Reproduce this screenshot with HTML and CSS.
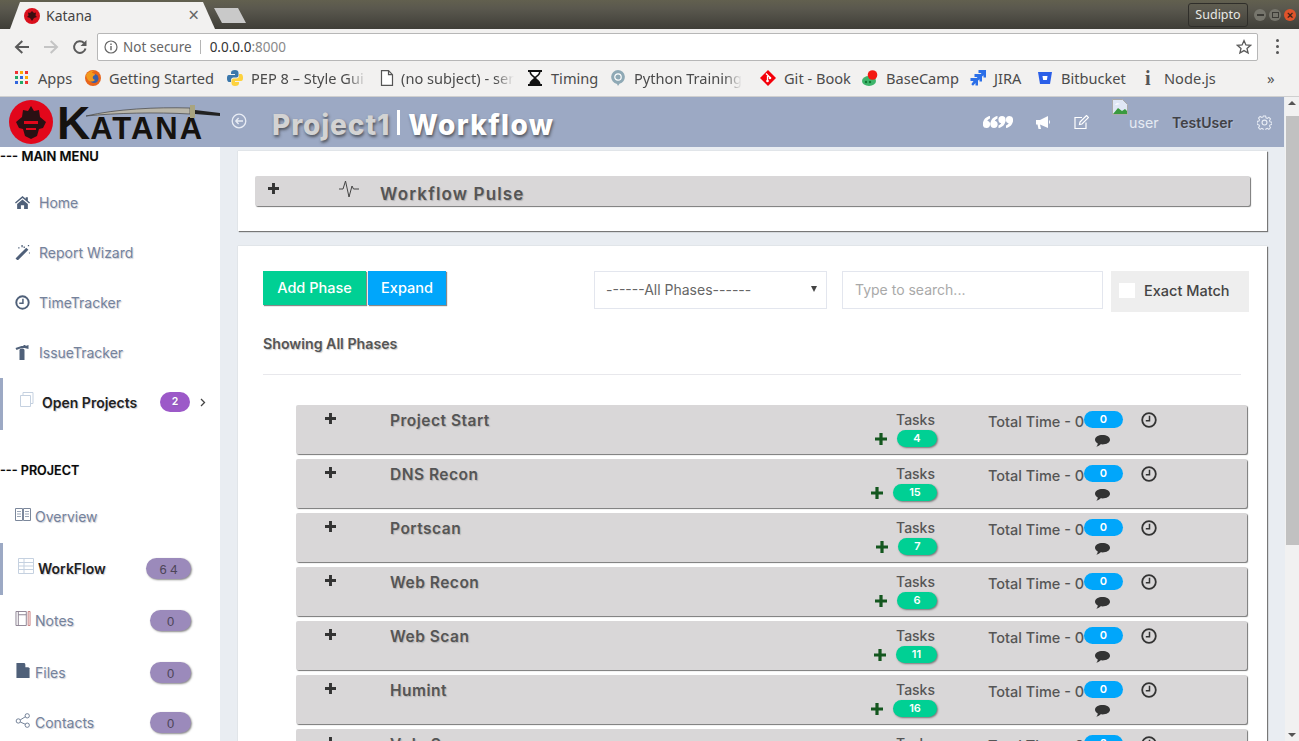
FILE: index.html
```html
<!DOCTYPE html>
<html lang="en">
<head>
<meta charset="utf-8">
<title>Katana</title>
<link rel="stylesheet" href="styles.css">
</head>
<body>
<svg class="defs" width="0" height="0" aria-hidden="true">
  <symbol id="i-plus" viewBox="0 0 12 12"><path d="M4.4 0h3.2v4.4H12v3.2H7.600V12H4.400V7.600H0V4.400h4.400z"/></symbol>
  <symbol id="i-clock" viewBox="0 0 16 16"><circle cx="8" cy="8" r="6.800" fill="none" stroke="currentColor" stroke-width="1.800"/><path d="M8.500 3.800v4.900H4.800" fill="none" stroke="currentColor" stroke-width="1.500"/></symbol>
  <symbol id="i-comment" viewBox="0 0 15 12"><path d="M7.500 0C11.600 0 15 2.100 15 4.700S11.600 9.400 7.500 9.400c-.6 0-1.200 0-1.800-.1C4.600 10.400 3.200 11.300 1.400 11.800c.8-.9 1.300-2 1.400-3.300C1.100 7.600 0 6.200 0 4.700 0 2.100 3.400 0 7.500 0z"/></symbol>
</svg>

<div class="tabstrip">
  <div class="tab">
    <svg class="fav" viewBox="0 0 16 16"><circle cx="8" cy="8" r="8" fill="#d9101c"/><path d="M8 3l2 2 2-.5-.5 3L13 9l-3 1-2 3-2-3-3-1 1.500-1.500-.5-3 2 .5z" fill="#3b0d10"/></svg>
    <span class="tab-title">Katana</span>
    <span class="tab-close">×</span>
  </div>
  <div class="newtab"></div>
  <div class="winspace"></div>
  <div class="profile">Sudipto</div>
  <div class="winbtns">
    <span class="winbtn"><span class="wb-min"></span></span>
    <span class="winbtn"><span class="wb-max"></span></span>
    <span class="winbtn wb-close">×</span>
  </div>
</div>

<div class="toolbar">
  <svg class="nav" viewBox="0 0 16 16"><path d="M15 8H2.500M8.300 2 2 8l6.300 6" fill="none" stroke="#5a5a5a" stroke-width="2"/></svg>
  <svg class="nav" viewBox="0 0 16 16"><path d="M1 8h12.500M7.700 2 14 8l-6.300 6" fill="none" stroke="#c4c4c4" stroke-width="2"/></svg>
  <svg class="nav" viewBox="0 0 16 16"><path d="M13.500 9.500A5.800 5.800 0 1 1 12 4" fill="none" stroke="#5a5a5a" stroke-width="2"/><path d="M14.500 1v6h-6z" fill="#5a5a5a"/></svg>
  <div class="omni">
    <svg class="omni-info" viewBox="0 0 14 14"><circle cx="7" cy="7" r="6" fill="none" stroke="#666" stroke-width="1.200"/><path d="M6.300 6h1.400v4.300H6.300zM6.300 3.500h1.400v1.400H6.300z" fill="#666"/></svg>
    <span class="omni-ns">Not secure</span>
    <span class="omni-sep"></span>
    <span class="omni-host">0.0.0.0</span><span class="omni-port">:8000</span>
    <svg class="omni-star" viewBox="0 0 16 16"><path d="M8 1.600l1.900 4.300 4.700.4-3.600 3.100 1.100 4.600L8 11.600 3.900 14l1.100-4.600L1.400 6.300l4.700-.4z" fill="none" stroke="#5a5a5a" stroke-width="1.300"/></svg>
  </div>
  <div class="kebab"><i></i><i></i><i></i></div>
</div>

<div class="bookmarks">
  <div class="bm bm-apps">
    <svg class="bm-ic" viewBox="0 0 14 14"><path fill="#e33" d="M0 0h3v3H0z"/><path fill="#fa0" d="M5 0h3v3H5z"/><path fill="#e33" d="M10 0h3v3h-3z"/><path fill="#2a6" d="M0 5h3v3H0z"/><path fill="#36d" d="M5 5h3v3H5z"/><path fill="#fa0" d="M10 5h3v3h-3z"/><path fill="#36d" d="M0 10h3v3H0z"/><path fill="#2a6" d="M5 10h3v3H5z"/><path fill="#e33" d="M10 10h3v3h-3z"/></svg>
    <span>Apps</span>
  </div>
  <div class="bm bm-ff">
    <svg class="bm-ic" viewBox="0 0 16 16"><circle cx="8" cy="8" r="8" fill="#e8641b"/><circle cx="9" cy="8.500" r="4.500" fill="#3b5fa8"/><path d="M1 5c2-3 5-5 9-4-2 0-3 1-3 2 2 0 3 1 3 2-3 1-3 4 0 5-3 3-8 2-9-5z" fill="#f29a1f"/></svg>
    <span>Getting Started</span>
  </div>
  <div class="bm bm-py fade">
    <svg class="bm-ic" viewBox="0 0 16 16"><path d="M8 0c-3 0-4 1-4 3v1h4v1H2C0 5 0 7 0 8.500S.5 12 2 12h2v-2c0-1.500 1-2.500 2.500-2.500h3c1 0 2-1 2-2V3c0-2-1-3-3.500-3z" fill="#3b77ab"/><path d="M8 16c3 0 4-1 4-3v-1H8v-1h6c2 0 2-2 2-3.500S15.500 4 14 4h-2v2c0 1.500-1 2.500-2.500 2.500h-3c-1 0-2 1-2 2V13c0 2 1 3 3.500 3z" fill="#fdd23e"/></svg>
    <span>PEP 8 – Style Gui</span>
  </div>
  <div class="bm bm-doc fade">
    <svg class="bm-ic" viewBox="0 0 14 16"><path d="M1.500.7h7l4 4v10.600h-11zM8.500.7v4h4" fill="#fff" stroke="#555" stroke-width="1.200"/></svg>
    <span>(no subject) - sen</span>
  </div>
  <div class="bm bm-time">
    <svg class="bm-ic" viewBox="0 0 16 16"><path d="M1 0h14v2h-1.500c0 3-3 4.500-4.500 6 1.500 1.500 4.500 3 4.500 6H15v2H1v-2h1.500c0-3 3-4.500 4.500-6-1.500-1.500-4.500-3-4.500-6H1z" fill="#111"/><path d="M4 2h8c-.3 2-2.500 3.500-4 4.700C6.500 5.500 4.300 4 4 2z" fill="#fff"/></svg>
    <span>Timing</span>
  </div>
  <div class="bm bm-pt fade">
    <svg class="bm-ic" viewBox="0 0 14 16"><path d="M7 0a7 7 0 0 1 1.500 13.800L7 16l-1-2.100A7 7 0 0 1 7 0z" fill="#8fa9b5"/><circle cx="7" cy="7" r="3.200" fill="none" stroke="#fff" stroke-width="1.200"/></svg>
    <span>Python Training -</span>
  </div>
  <div class="bm bm-git">
    <svg class="bm-ic" viewBox="0 0 16 16"><path d="M8 0l8 8-8 8-8-8z" fill="#f4000a"/><path d="M6 3.500l4 4M7.500 6v5" stroke="#fff" stroke-width="1.300"/><circle cx="7.500" cy="11" r="1.300" fill="#fff"/><circle cx="10" cy="8" r="1.300" fill="#fff"/></svg>
    <span>Git - Book</span>
  </div>
  <div class="bm bm-bc">
    <svg class="bm-ic" viewBox="0 0 16 16"><ellipse cx="7" cy="11" rx="7" ry="5" fill="#3eb56b"/><circle cx="10.500" cy="5" r="4.800" fill="#f41a12"/><circle cx="4" cy="12" r="1.200" fill="#173"/><circle cx="8" cy="12" r="1.200" fill="#173"/></svg>
    <span>BaseCamp</span>
  </div>
  <div class="bm bm-jira">
    <svg class="bm-ic" viewBox="0 0 16 16"><path d="M8.500 0H16v7.500h-2.500V5.200L10.500 8 8.800 6.300 11.500 3H8.500zM4.500 4H12v7.500H9.500V9.200L6.500 12 4.800 10.300 7.500 7H4.500zM.5 8H8v7.500H5.500V13L3 15.800 1.300 14.300 3.500 11H.5z" fill="#2b6fe8"/></svg>
    <span>JIRA</span>
  </div>
  <div class="bm bm-bb">
    <svg class="bm-ic" viewBox="0 0 14 14"><path d="M0 1h14l-2 12H2z" fill="#2b5fe8"/><path d="M4.500 5h5l-.6 4H5.100z" fill="#fff"/></svg>
    <span>Bitbucket</span>
  </div>
  <div class="bm bm-node">
    <span class="bm-i">i</span>
    <span>Node.js</span>
  </div>
  <div class="bm-more">»</div>
</div>

<div class="app">
  <div class="app-left">
    <header class="header">
      <div class="logo">
        <svg class="logo-badge" viewBox="0 0 44 44"><circle cx="22" cy="22" r="22" fill="#e2071b"/><path d="M22 6l3 5 5-1 1 7 6 5-3 6-4 1-2 7-6 3-6-3-2-7-4-1-3-6 6-5 1-7 5 1z" fill="#2a1013"/><path d="M15 21h14v3H15zM17 28h10v2H17z" fill="#e2071b"/></svg>
        <span class="logo-text"><span class="logo-k">K</span>ATANA</span>
        <svg class="logo-sword" viewBox="0 0 134 14"><path d="M0 11C30 4 70 2 104 3v6C70 7 30 8 0 11z" fill="#b9b6aa" stroke="#444" stroke-width=".7"/><path d="M104 0h5v13h-5z" fill="#a8a47f"/><path d="M109 5l25 3v3l-25-2z" fill="#222"/></svg>
      </div>
      <div class="hdr-main">
        <svg class="hdr-back" viewBox="0 0 16 16"><circle cx="8" cy="8" r="6.800" fill="none" stroke="#e9edf5" stroke-width="1.300"/><path d="M12 8H5M7.600 5 4.800 8l2.800 3" fill="none" stroke="#e9edf5" stroke-width="1.300"/></svg>
        <h1 class="hdr-title"><span class="hdr-project">Project1</span><span class="hdr-bar"></span><span class="hdr-page">Workflow</span></h1>
        <div class="hdr-actions">
          <svg class="hdr-quote" viewBox="0 0 30 12" fill="#fff"><circle cx="3.500" cy="8.300" r="3.600"/><path d="M0 8C0 3.500 3 .7 7 0v2.500C5 3 3.800 5 3.800 8z"/><circle cx="11" cy="8.300" r="3.600"/><path d="M7.500 8c0-4.500 3-7.300 7-8v2.500c-2 .5-3.200 2.500-3.200 5.500z"/><circle cx="19" cy="3.700" r="3.600"/><path d="M22.500 4c0 4.500-3 7.300-7 8V9.500c2-.5 3.200-2.500 3.200-5.500z"/><circle cx="26.500" cy="3.700" r="3.600"/><path d="M30 4c0 4.500-3 7.300-7 8V9.500c2-.5 3.200-2.500 3.200-5.500z"/></svg>
          <svg class="hdr-mega" viewBox="0 0 15 13"><path d="M0 4h4l8-4v12L4 8.500 5 13H2.500L1.500 8.500H0z" fill="#fff"/><path d="M13 4c1.300.5 1.300 3.500 0 4z" fill="#fff"/></svg>
          <svg class="hdr-edit" viewBox="0 0 15 15"><path d="M12 7.500V13.500H1V2.500h7" fill="none" stroke="#fff" stroke-width="1.200"/><path d="M6 7l6.500-6.500 2 2L8 9l-2.500.5z" fill="none" stroke="#fff" stroke-width="1.200"/></svg>
          <div class="hdr-img">
            <svg class="broken" viewBox="0 0 16 16"><path d="M.5.5h10l5 5v10H.5z" fill="#dfe7f5" stroke="#aaa"/><path d="M1 15l5-6 4 3 3-2 2 2v3z" fill="#3a9a3f"/><path d="M3 6c1-2 3-2 5-1z" fill="#fff"/></svg>
            <span class="hdr-alt">user</span>
          </div>
          <span class="hdr-user">TestUser</span>
          <svg class="hdr-gear" viewBox="0 0 16 16"><circle cx="8" cy="8" r="2.600" fill="none" stroke="#e9edf5" stroke-width="1.200"/><path d="M6.800 1h2.400l.4 2 1.300.6 1.800-1.100 1.700 1.700-1.100 1.800.6 1.300 2 .4v2.400l-2 .4-.6 1.300 1.100 1.800-1.700 1.700-1.800-1.100-1.300.6-.4 2H6.800l-.4-2-1.300-.6-1.800 1.100-1.700-1.700 1.100-1.800-.6-1.300-2-.4V6.800l2-.4.600-1.300-1.100-1.800 1.700-1.700 1.800 1.100 1.300-.6z" fill="none" stroke="#e9edf5" stroke-width="1.100"/></svg>
        </div>
      </div>
    </header>

    <div class="body">
      <aside class="sidebar">
        <div class="sec sec-main">--- MAIN MENU</div>
        <nav class="menu">
          <a class="mi">
            <svg class="mi-ic" viewBox="0 0 14 12"><path d="M7 0l3 2.600V1h2v3.300L14 6l-.8.9L7 1.700.8 6.900 0 6zM2 7.400L7 3.200l5 4.200V12H8.500V8.500h-3V12H2z" fill="#4f6079"/></svg>
            <span>Home</span>
          </a>
          <a class="mi">
            <svg class="mi-ic" viewBox="0 0 14 14"><path d="M10.500 2.500l2 2L2.500 14.500l-2-2z" fill="#4f6079"/><path d="M3 2h1.200v1.200H3zM6 0h1.200v2H6zM12 0h1.200v1.200H12zM13 7h1v1h-1zM8 1.500h1.200v1.200H8z" fill="#4f6079"/></svg>
            <span>Report Wizard</span>
          </a>
          <a class="mi">
            <svg class="mi-ic" viewBox="0 0 14 14"><circle cx="7" cy="7" r="5.800" fill="none" stroke="#4f6079" stroke-width="1.800"/><path d="M7.400 3.500v4.200H4" fill="none" stroke="#4f6079" stroke-width="1.400"/></svg>
            <span>TimeTracker</span>
          </a>
          <a class="mi">
            <svg class="mi-ic" viewBox="0 0 14 15"><path d="M4 5.500C4 4 5 3.500 6.500 3.500S9 4 9 5.500V15H4z" fill="#4f6079"/><path d="M0 3l6-2h2V0h2v1l3-1v4L9 3H6L1 5z" fill="#4f6079"/></svg>
            <span>IssueTracker</span>
          </a>
          <a class="mi mi-open">
            <svg class="mi-ic-open" viewBox="0 0 14 15"><path d="M3 3V.5h10v11h-2.500" fill="#fff" stroke="#c5d1e0"/><path d="M.5 3.500H10.500V14.500H.5z" fill="#fff" stroke="#c5d1e0"/></svg>
            <span class="mi-open-label">Open Projects</span>
            <span class="badge-purple">2</span>
            <svg class="mi-chev" viewBox="0 0 6 9"><path d="M1 1l3.500 3.500L1 8" fill="none" stroke="#444" stroke-width="1.300"/></svg>
          </a>
        </nav>
        <div class="sec sec-proj">--- PROJECT</div>
        <nav class="menu">
          <a class="pi">
            <svg class="pi-ic" viewBox="0 0 16 14"><path d="M.5 1h7v12h-7zM8.500 1h7v12h-7z" fill="#fff" stroke="#7b879b"/><path d="M2 4h4M2 6.500h4M2 9h4M10 4h4M10 6.500h4M10 9h4" stroke="#9ba6b7"/></svg>
            <span>Overview</span>
          </a>
          <a class="pi pi-active">
            <svg class="pi-ic-active" viewBox="0 0 16 16"><path d="M.5.5h15v15H.5zM.5 4.500h15M.5 8h15M.5 11.500h15M6 .5v15" fill="#fff" stroke="#c5d1e0"/></svg>
            <span class="pi-active-label">WorkFlow</span>
            <span class="badge-soft badge-wide">6 4</span>
          </a>
          <a class="pi">
            <svg class="pi-ic" viewBox="0 0 16 16"><path d="M.5.5h11v15H.5zM3 .5v15M3 4h8.500" fill="#fff" stroke="#8a7f8f"/><path d="M13.500.5h2v15h-2z" fill="#fff" stroke="#c57a7a"/></svg>
            <span>Notes</span>
            <span class="badge-soft">0</span>
          </a>
          <a class="pi">
            <svg class="pi-ic" viewBox="0 0 14 16"><path d="M0 0h8.500L14 5.500V16H0z" fill="#4f6079"/><path d="M9.500 0L14 4.500H9.500z" fill="#fff"/></svg>
            <span>Files</span>
            <span class="badge-soft">0</span>
          </a>
          <a class="pi pi-last">
            <svg class="pi-ic" viewBox="0 0 16 16"><circle cx="3" cy="8.500" r="2.300" fill="none" stroke="#6c7b92"/><circle cx="12.500" cy="3" r="2.300" fill="none" stroke="#6c7b92"/><circle cx="12.500" cy="13" r="2.300" fill="none" stroke="#6c7b92"/><path d="M5 7.400l5.500-3.400M5 9.600l5.500 2.400" stroke="#6c7b92"/></svg>
            <span>Contacts</span>
            <span class="badge-soft">0</span>
          </a>
        </nav>
      </aside>

      <main class="main">
        <section class="card card-pulse">
          <div class="pulse">
            <svg class="pulse-plus"><use href="#i-plus"/></svg>
            <svg class="pulse-ic" viewBox="0 0 20 18"><path d="M0 9h4l2.500-8 3.500 16 3-11 1.500 3H20" fill="none" stroke="#444" stroke-width="1"/></svg>
            <span class="pulse-title">Workflow Pulse</span>
          </div>
        </section>

        <section class="card card-list">
          <div class="controls">
            <button class="btn btn-green">Add Phase</button>
            <button class="btn btn-blue">Expand</button>
            <div class="select"><span>------All Phases------</span><i class="caret"></i></div>
            <div class="search">Type to search...</div>
            <label class="exact"><i class="check"></i><span>Exact Match</span></label>
          </div>
          <h4 class="showing">Showing All Phases</h4>
          <hr class="rule">
          <div class="phases">
            <div class="phase">
              <svg class="ph-plus"><use href="#i-plus"/></svg>
              <span class="ph-name">Project Start</span>
              <div class="ph-tasks"><span class="ph-label">Tasks</span><div class="ph-add"><svg class="add-ic"><use href="#i-plus"/></svg><span class="pill-green p1">4</span></div></div>
              <div class="ph-time"><div class="ph-line"><span class="ph-tt">Total Time - 0</span><span class="pill-blue">0</span></div><svg class="ph-comment"><use href="#i-comment"/></svg></div>
              <svg class="ph-clock"><use href="#i-clock"/></svg>
            </div>
            <div class="phase">
              <svg class="ph-plus"><use href="#i-plus"/></svg>
              <span class="ph-name">DNS Recon</span>
              <div class="ph-tasks"><span class="ph-label">Tasks</span><div class="ph-add"><svg class="add-ic"><use href="#i-plus"/></svg><span class="pill-green p2">15</span></div></div>
              <div class="ph-time"><div class="ph-line"><span class="ph-tt">Total Time - 0</span><span class="pill-blue">0</span></div><svg class="ph-comment"><use href="#i-comment"/></svg></div>
              <svg class="ph-clock"><use href="#i-clock"/></svg>
            </div>
            <div class="phase">
              <svg class="ph-plus"><use href="#i-plus"/></svg>
              <span class="ph-name">Portscan</span>
              <div class="ph-tasks"><span class="ph-label">Tasks</span><div class="ph-add"><svg class="add-ic"><use href="#i-plus"/></svg><span class="pill-green p1s">7</span></div></div>
              <div class="ph-time"><div class="ph-line"><span class="ph-tt">Total Time - 0</span><span class="pill-blue">0</span></div><svg class="ph-comment"><use href="#i-comment"/></svg></div>
              <svg class="ph-clock"><use href="#i-clock"/></svg>
            </div>
            <div class="phase">
              <svg class="ph-plus"><use href="#i-plus"/></svg>
              <span class="ph-name">Web Recon</span>
              <div class="ph-tasks"><span class="ph-label">Tasks</span><div class="ph-add"><svg class="add-ic"><use href="#i-plus"/></svg><span class="pill-green p1">6</span></div></div>
              <div class="ph-time"><div class="ph-line"><span class="ph-tt">Total Time - 0</span><span class="pill-blue">0</span></div><svg class="ph-comment"><use href="#i-comment"/></svg></div>
              <svg class="ph-clock"><use href="#i-clock"/></svg>
            </div>
            <div class="phase">
              <svg class="ph-plus"><use href="#i-plus"/></svg>
              <span class="ph-name">Web Scan</span>
              <div class="ph-tasks"><span class="ph-label">Tasks</span><div class="ph-add"><svg class="add-ic"><use href="#i-plus"/></svg><span class="pill-green p11">11</span></div></div>
              <div class="ph-time"><div class="ph-line"><span class="ph-tt">Total Time - 0</span><span class="pill-blue">0</span></div><svg class="ph-comment"><use href="#i-comment"/></svg></div>
              <svg class="ph-clock"><use href="#i-clock"/></svg>
            </div>
            <div class="phase">
              <svg class="ph-plus"><use href="#i-plus"/></svg>
              <span class="ph-name">Humint</span>
              <div class="ph-tasks"><span class="ph-label">Tasks</span><div class="ph-add"><svg class="add-ic"><use href="#i-plus"/></svg><span class="pill-green p2">16</span></div></div>
              <div class="ph-time"><div class="ph-line"><span class="ph-tt">Total Time - 0</span><span class="pill-blue">0</span></div><svg class="ph-comment"><use href="#i-comment"/></svg></div>
              <svg class="ph-clock"><use href="#i-clock"/></svg>
            </div>
            <div class="phase">
              <svg class="ph-plus"><use href="#i-plus"/></svg>
              <span class="ph-name">Vuln Scan</span>
              <div class="ph-tasks"><span class="ph-label">Tasks</span><div class="ph-add"><svg class="add-ic"><use href="#i-plus"/></svg><span class="pill-green p1">5</span></div></div>
              <div class="ph-time"><div class="ph-line"><span class="ph-tt">Total Time - 0</span><span class="pill-blue">0</span></div><svg class="ph-comment"><use href="#i-comment"/></svg></div>
              <svg class="ph-clock"><use href="#i-clock"/></svg>
            </div>
          </div>
        </section>
      </main>
    </div>
  </div>
  <div class="scrollbar">
    <i class="sb-up"></i>
    <div class="sb-thumb"></div>
    <i class="sb-down"></i>
  </div>
</div>
</body>
</html>
```

FILE: styles.css
```css
* { box-sizing: border-box; }
html, body { margin: 0; padding: 0; height: 741px; overflow: hidden; }
body { font-family: Inter, "Open Sans", sans-serif; color: #444; background: #e9edf2; }
.defs { position: absolute; }
a { display: flex; }

/* browser chrome */
.tabstrip { height: 29px; display: flex; background: linear-gradient(#62604f 0, #5a584e 30%, #3f3e38 100%); }
.tab { width: 205px; height: 27px; margin: 2px 0 0 10px; padding: 0 0 0 14px; display: flex; align-items: center; background: #f2f1f0; clip-path: polygon(0 100%, 10px 0, 193px 0, 205px 100%); font: 14px "Noto Sans", sans-serif; color: #444; }
.fav { width: 16px; height: 16px; }
.tab-title { margin-left: 6px; flex: 1; }
.tab-close { margin-right: 16px; font-size: 19px; color: #666; line-height: 1; }
.newtab { width: 32px; height: 15px; margin: 8px 0 0 -1px; background: #c9c9c9; clip-path: polygon(0 0, 24px 0, 32px 100%, 8px 100%); }
.winspace { flex: 1; }
.profile { width: 60px; height: 24px; margin-top: 3px; border: 1px solid #2f2e2a; border-radius: 3px; color: #e8e8e4; font: 12.500px/22px "Noto Sans", sans-serif; text-align: center; }
.winbtns { display: flex; gap: 3px; padding: 4px 3px 0 6px; }
.winbtn { width: 12px; height: 12px; margin-top: 5px; border-radius: 50%; background: #76756c; display: flex; align-items: center; justify-content: center; }
.wb-min { width: 7px; height: 2px; background: #3c3b36; }
.wb-max { width: 7px; height: 6px; border: 1px solid #3c3b36; }
.wb-close { background: #e0532b; color: #3c2015; font: 700 11px/12px "Liberation Sans", sans-serif; }

.toolbar { height: 32px; background: #f2f1f0; display: flex; align-items: center; padding: 3px 0 0 14px; }
.nav { width: 16px; height: 16px; margin-right: 13px; flex: none; }
.omni { width: 1161px; height: 28px; margin-left: -4px; display: flex; align-items: center; background: #fff; border: 1px solid #b7b7b7; border-radius: 2px; padding-left: 6px; font: 13.500px "Noto Sans", sans-serif; }
.omni-info { width: 14px; height: 14px; }
.omni-ns { margin-left: 5px; color: #666; }
.omni-sep { width: 1px; height: 14px; margin: 0 9px 0 8px; background: #b5b5b5; }
.omni-host { color: #333; }
.omni-port { color: #8a8a8a; }
.omni-star { width: 16px; height: 16px; margin-left: auto; margin-right: 5px; }
.kebab { display: flex; flex-direction: column; gap: 3px; margin-left: 18px; }
.kebab i { width: 3px; height: 3px; background: #555; border-radius: 50%; }

.bookmarks { height: 36px; padding-bottom: 1px; background: #f2f1f0; border-bottom: 1px solid #cfcfcf; display: flex; align-items: center; font: 14.600px "Noto Sans", sans-serif; color: #4b4b4b; white-space: nowrap; }
.bm { display: flex; align-items: center; flex: none; }
.bm-ic { width: 16px; height: 16px; flex: none; margin-right: 8px; }
.fade { -webkit-mask-image: linear-gradient(90deg, #000 86%, transparent); mask-image: linear-gradient(90deg, #000 86%, transparent); }
.bm-apps { width: 70px; margin-left: 15px; }
.bm-apps .bm-ic { width: 14px; height: 14px; margin-right: 9px; }
.bm-ff { width: 142px; }
.bm-py { width: 140px; }
.bm-py + .bm-doc { margin-left: 13px; }
.bm-doc { width: 134px; }
.bm-doc .bm-ic { width: 14px; margin-right: 7px; }
.bm-time { width: 71px; margin-left: 13px; }
.bm-pt { width: 131px; margin-left: 13px; }
.bm-pt .bm-ic { width: 14px; margin-right: 9px; }
.bm-git { width: 90px; margin-left: 18px; }
.bm-bc { width: 95px; margin-left: 12px; }
.bm-jira { width: 55px; margin-left: 13px; }
.bm-bb { width: 90px; margin-left: 13px; }
.bm-bb .bm-ic { width: 14px; margin-right: 9px; }
.bm-node { width: 71px; margin-left: 17px; }
.bm-i { width: 19px; font: 700 20px "Liberation Serif", serif; color: #555; }
.bm-more { margin-left: 51px; font-size: 15px; color: #555; }

/* app */
.app { height: 644px; display: flex; }
.app-left { width: 1285px; flex: none; display: flex; flex-direction: column; }
.header { height: 50px; flex: none; width: 1284px; display: flex; background: #9ca9c4; }
.logo { width: 220px; height: 50px; flex: none; display: flex; align-items: center; padding-left: 9px; position: relative; }
.logo-badge { width: 44px; height: 44px; flex: none; }
.logo-text { margin-left: 4px; padding-top: 7px; font: 700 31px/36px "Liberation Sans", sans-serif; letter-spacing: 2px; color: #15120f; }
.logo-k { font-size: 46px; line-height: 36px; letter-spacing: 0; }
.logo-sword { position: absolute; left: 86px; top: 8px; width: 134px; height: 14px; }
.hdr-main { flex: 1; display: flex; align-items: center; padding-left: 11px; }
.hdr-back { width: 16px; height: 16px; margin-top: -2px; }
.hdr-title { margin: 6px 0 0 25px; display: flex; align-items: center; font: 800 28px/1 Inter, sans-serif; letter-spacing: .9px; text-shadow: 1px 2px 3px rgba(40,40,40,.65); }
.hdr-project { color: #d3d3d3; }
.hdr-bar { width: 3px; height: 25px; margin: -6px 8px 0 7px; background: #fff; }
.hdr-page { color: #fff; letter-spacing: 1.400px; }
.hdr-actions { margin-left: auto; display: flex; align-items: center; height: 50px; }
.hdr-quote { width: 30px; height: 12px; }
.hdr-mega { width: 15px; height: 13px; margin-left: 23px; }
.hdr-edit { width: 15px; height: 15px; margin-left: 23px; }
.hdr-img { width: 46px; height: 50px; margin-left: 23px; position: relative; }
.broken { position: absolute; left: 0; top: 2px; width: 16px; height: 16px; }
.hdr-alt { position: absolute; left: 17px; top: 17px; color: #e6ebf3; font: 14.200px/18px Inter, sans-serif; }
.hdr-user { margin-left: 14px; color: #414146; font: 600 14px Inter, sans-serif; text-shadow: 1px 1px 1px rgba(255,255,255,.25); }
.hdr-gear { width: 15px; height: 15px; margin: 0 12px 0 24px; }

.body { flex: 1; display: flex; min-height: 0; }
.sidebar { width: 220px; flex: none; background: #fff; overflow: hidden; color: #75829b; font-size: 14px; }
.sec { height: 18px; font: 600 13px/18px Inter, sans-serif; color: #0a0a0a; text-shadow: 0 0 1px rgba(0,0,0,.3); }
.sec-proj { margin-top: 32px; font-size: 12.600px; }
.menu { display: flex; flex-direction: column; }
.sec-main + .menu { margin-top: 13px; }
.sec-proj + .menu { margin-top: 11px; }
.mi { height: 50px; align-items: center; padding: 0 0 2px 15px; text-shadow: 1px 1px 1px rgba(90,100,130,.3); }
.mi-ic { width: 15px; height: 15px; margin-right: 9px; flex: none; }
.mi-open { height: 52px; border-left: 3px solid #9ca9c4; padding: 0 0 4px 17px; color: #222; }
.mi-ic-open { width: 14px; height: 15px; margin: -6px 8px 0 0; flex: none; }
.mi-open-label { font-weight: 600; width: 118px; }
.badge-purple { width: 30px; height: 20px; border-radius: 10px; background: #9c59c8; color: #fff; font: 600 10.500px/20px Inter, sans-serif; text-align: center; }
.mi-chev { width: 6px; height: 9px; margin-left: 10px; }
.pi { height: 52px; align-items: center; padding: 0 0 2px 15px; position: relative; text-shadow: 1px 1px 1px rgba(90,100,130,.3); }
.pi-ic { width: 16px; height: 15px; margin: -4px 4px 0 0; flex: none; }
.pi > span:not(.badge-soft) { flex: 1; }
.pi-active { border-left: 3px solid #9ca9c4; padding-left: 15px; color: #222; }
.pi-ic-active { width: 16px; height: 16px; margin: -5px 4px 0 0; flex: none; }
.pi-active-label { font-weight: 600; }
.pi-last { height: 48px; }
.badge-soft { width: 41px; height: 21px; margin: 1px 29px 0 0; border-radius: 11px; background: #9b8abb; color: #4d4558; font: 13px/23px "Liberation Sans", sans-serif; text-align: center; box-shadow: 1px 1px 2px rgba(60,60,60,.6); text-shadow: none; }
.badge-wide { width: 45px; }

.main { flex: 1; min-width: 0; padding: 4px 18px 0; overflow: hidden; }
.card { background: #fff; box-shadow: 1px 1px 1px #777, 0 0 1px #bbb; }
.card-pulse { height: 80px; padding: 25px 17px 0; }
.pulse { height: 30px; display: flex; align-items: center; padding-left: 13px; background: #d9d7d8; border-radius: 2px; box-shadow: 1px 1px 1px #777; }
.pulse-plus { width: 11px; height: 11px; margin-top: -5px; fill: #333; flex: none; }
.pulse-ic { width: 20px; height: 18px; margin: -4px 0 0 60px; flex: none; }
.pulse-title { margin: 5px 0 0 21px; font: 600 17px Inter, sans-serif; letter-spacing: 1.150px; color: #555; text-shadow: 1px 1px 1px rgba(100,100,100,.35); }

.card-list { margin-top: 15px; height: 600px; padding: 25px 18px 0 25px; }
.controls { display: flex; align-items: flex-start; height: 41px; }
.btn { height: 34px; border: 0; padding: 0 0 2px; color: #fff; font: 500 14.500px Inter, sans-serif; box-shadow: 1px 1px 1px #888; }
.btn-green { width: 103px; background: #00d094; margin-right: 2px; }
.btn-blue { width: 78px; margin-right: 1px; background: #00a6fb; }
.select { width: 233px; height: 38px; margin-left: 147px; padding: 0 9px 2px 11px; border: 1px solid #e3e6ee; display: flex; align-items: center; justify-content: space-between; font: 14px Inter, sans-serif; color: #666; }
.caret { width: 0; height: 0; border: 3.500px solid transparent; border-top: 6px solid #444; border-bottom: 0; }
.search { width: 261px; height: 38px; margin-left: 15px; padding: 0 12px; border: 1px solid #e3e6ee; font: 14px/35px Inter, sans-serif; color: #a9a9a9; }
.exact { width: 138px; height: 41px; margin-left: 8px; padding: 0 0 2px 8px; display: flex; align-items: center; gap: 9px; background: #eee; font: 500 14.500px Inter, sans-serif; color: #444; }
.check { width: 16px; height: 15px; background: #fff; }
.showing { margin: 23px 0 0; height: 18px; font: 600 14.200px/18px Inter, sans-serif; color: #555; text-shadow: 1px 1px 1px rgba(100,100,100,.35); }
.rule { margin: 21px 8px 0 0; border: 0; border-top: 1px solid #e8e8ec; }
.phases { margin-top: 30px; padding: 0 2px 0 33px; display: flex; flex-direction: column; gap: 5px; }
.phase { height: 49px; flex: none; padding: 0 0 0 29px; display: flex; align-items: flex-start; background: #d9d7d8; border-radius: 2px; box-shadow: 1px 1px 1px #777; }
.ph-plus { width: 11px; height: 11px; margin-top: 8px; fill: #333; flex: none; }
.ph-name { width: 484px; margin: 7px 0 0 54px; flex: none; font: 600 15.500px/18px Inter, sans-serif; letter-spacing: .5px; color: #555; text-shadow: 1px 1px 1px rgba(100,100,100,.3); }
.ph-tasks { width: 66px; margin-left: -3px; flex: none; display: flex; flex-direction: column; align-items: flex-end; }
.ph-label { margin: 6px 2px 0 0; font: 500 14px/18px Inter, sans-serif; color: #555; }
.ph-add { margin-top: 1px; display: flex; align-items: center; gap: 10px; }
.add-ic { width: 12px; height: 12px; fill: #14571f; margin-top: 1px; }
.pill-green { height: 17px; border-radius: 9px; background: #00d094; color: #fff; font: 600 11px/17px Inter, sans-serif; text-align: center; box-shadow: 1px 1px 2px #777; }
.p1 { width: 40px; }
.p1s { width: 39px; }
.p11 { width: 41px; }
.p2 { width: 44px; }
.ph-time { width: 135px; margin-left: 51px; flex: none; display: flex; flex-direction: column; align-items: flex-end; }
.ph-line { display: flex; align-items: flex-start; }
.ph-tt { margin-top: 8px; width: 96px; white-space: nowrap; font: 500 14.500px/18px Inter, sans-serif; color: #555; }
.pill-blue { width: 39px; height: 17px; margin-top: 6px; border-radius: 9px; background: #00a6fb; color: #fff; font: 600 11px/17px Inter, sans-serif; text-align: center; }
.ph-comment { width: 15px; height: 12px; margin: 4px 13px 0 0; fill: #333; }
.ph-clock { width: 16px; height: 16px; margin: 7px 0 0 18px; color: #333; flex: none; }

.scrollbar { width: 14px; flex: none; background: #f1f1f1; position: relative; padding-top: 19px; }
.sb-thumb { width: 13px; height: 429px; margin-left: 1px; background: #c1c1c1; }
.sb-up, .sb-down { position: absolute; left: 3px; width: 0; height: 0; border: 4px solid transparent; }
.sb-up { top: 4px; border-bottom: 4px solid #555; border-top: 0; }
.sb-down { bottom: 4px; border-top: 4px solid #555; border-bottom: 0; }
```
